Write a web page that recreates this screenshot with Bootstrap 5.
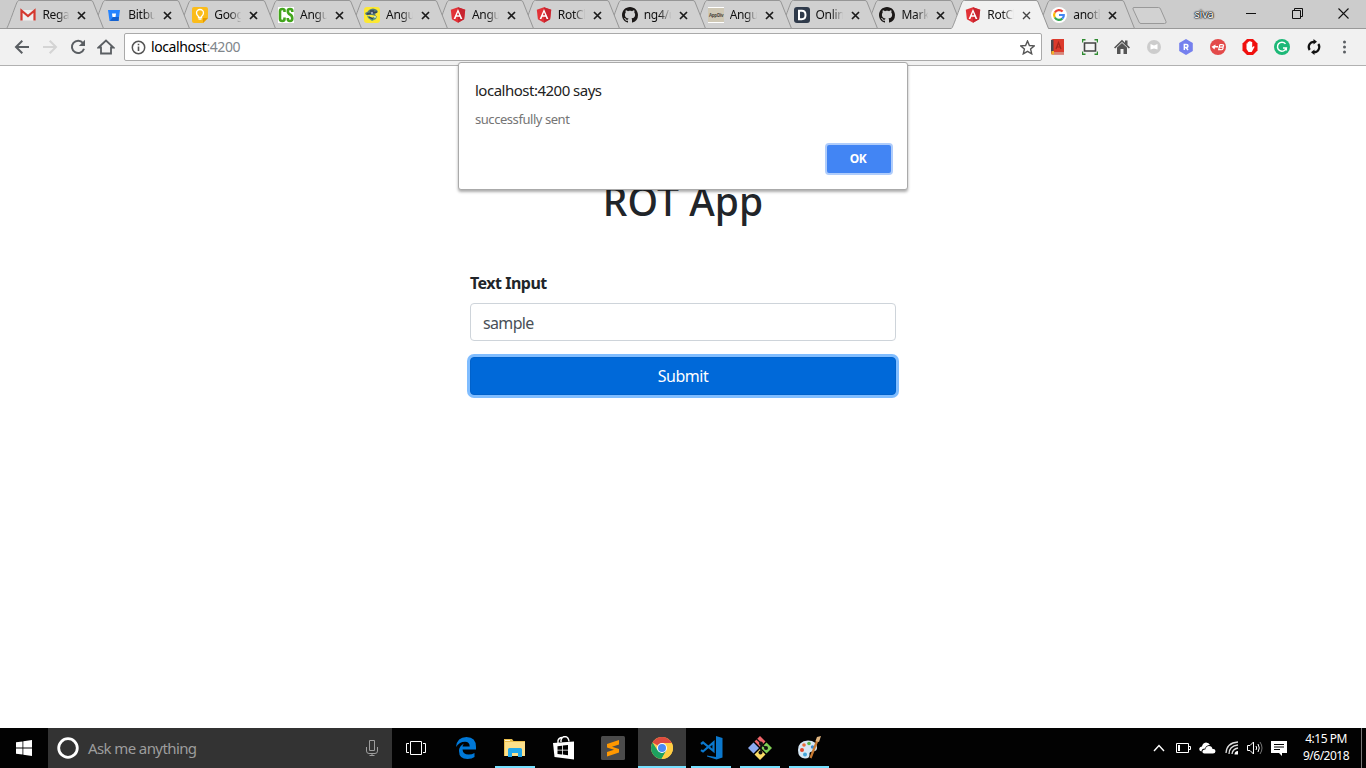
<!DOCTYPE html>
<html lang="en">
<head>
<meta charset="utf-8">
<title>RotClient</title>
<link href="https://cdn.jsdelivr.net/npm/bootstrap@5.3.0/dist/css/bootstrap.min.css" rel="stylesheet">
<style>
  body { height: 768px; overflow: hidden; font-family: "Noto Sans", "Open Sans", sans-serif; color: #212529; background: #fff; }
  svg { display: block; flex: none; }
  .tabstrip { height: 29px; background: #ccc; border-bottom: 1px solid #999; padding-left: 6.4px; }
  .tab-item { position: relative; flex: none; width: 98px; height: 29px; margin-right: -12.1px; padding: 1px 0 0 14px; font-size: 12px; color: #111; }
  .tab-item .shape { position: absolute; inset: 0; z-index: -1; }
  .tab-item { isolation: isolate; }
  .tab-label { width: 28px; height: 20px; line-height: 19px; margin-left: 6px; overflow: hidden; white-space: nowrap; letter-spacing: -.3px;
    -webkit-mask-image: linear-gradient(90deg, #000 55%, transparent 98%); mask-image: linear-gradient(90deg, #000 55%, transparent 98%); }
  .tab-x { margin-left: 7px; }
  .new-tab { margin: 6px 0 0 9px; }
  .profile { font-size: 11px; line-height: 28px; color: #fff; letter-spacing: -.2px; width: 48px; text-align: center;
    text-shadow: 0 0 1px #000, 0 0 1px #000, 0 0 2px #333, 0 0 2px #333; }
  .win-btn { width: 46px; height: 27px; }
  .toolbar { height: 37px; background: #f1f1f1; border-bottom: 1px solid #b1b1b1; padding-left: 8px; }
  .tool { width: 28px; height: 36px; }
  .ext { width: 32px; height: 36px; }
  .omnibox { width: 918px; height: 28px; margin-left: 4px; padding: 0 6px 0 6px; background: #fff; border: 1px solid #aaa; border-radius: 2px; font-size: 14px; letter-spacing: -.42px; line-height: 26px; color: #000; }
  .omnibox .port { color: #80868b; }
  .omnibox .address { margin-left: 5px; }
  .viewport { height: 662px; position: relative; }
  .dialog-box { position: absolute; z-index: 5; left: 458px; top: -4px; width: 450px; height: 128px; padding: 17px 14px 0 16px; background: #fff; border: 1px solid #aaa; border-radius: 3px; box-shadow: 0 2px 3px rgba(0,0,0,.33); }
  .dialog-title { font-size: 15px; line-height: 20px; letter-spacing: -.5px; color: #222; }
  .dialog-msg { font-size: 13px; line-height: 18px; margin-top: 10px; letter-spacing: -.45px; color: #757575; }
  .dialog-ok { width: 68px; height: 32px; padding: 0 2px 0 0; margin-top: 15px; background: #4285f4; border: 2px solid #b0cdfb; border-radius: 4px; color: #fff; font-size: 12px; font-weight: 700; letter-spacing: -.4px; line-height: 26px; }
  .app-form { width: 426px; padding-top: 111px; }
  .app-title { font-size: 39px; font-weight: 500; line-height: 48px; margin-bottom: 46px; letter-spacing: .1px; }
  .app-label { font-size: 16px; font-weight: 700; line-height: 24px; margin-bottom: 8px; letter-spacing: -.5px; }
  .app-input { height: 38px; padding: 7px 12px 5px; border: 1px solid #ced4da; border-radius: 4px; color: #495057; letter-spacing: -.65px; }
  .app-submit { height: 38px; margin-top: 16px; background: #0069d9; border-color: #0062cc; border-radius: 4px; color: #fff; letter-spacing: -.5px; box-shadow: 0 0 0 3px #80bdff; }
  .app-submit:hover { background: #0069d9; color: #fff; }
  .taskbar { height: 40px; background: #020202; color: #fff; }
  .search-box { width: 344px; background: #333; color: #9d9d9d; font-size: 15px; letter-spacing: -.6px; padding: 0 13px 0 8px; }
  .task-btn { width: 48px; height: 40px; margin-right: 1px; position: relative; }
  .task-btn.running::after { content: ""; position: absolute; left: 4px; right: 4px; bottom: 0; height: 2px; background: #76e0ff; }
  .task-btn.current { background: #3a3a3a; }
  .task-btn.current::after { left: 0; right: 0; }
  .tray-cell { width: 24px; height: 40px; }
  .clock { width: 64px; font-size: 12px; line-height: 17px; letter-spacing: -.5px; text-align: center; margin: 0 3px 2px 3px; }
  .peek { width: 5px; border-left: 1px solid #777; height: 40px; }
</style>
</head>
<body>
<svg width="0" height="0" class="position-absolute">
  <symbol id="tabshape" viewBox="0 0 98 29"><path d="M.5 28.5C2 28 10.500 2 11.500 1.500Q12 .5 13.500 .5H85Q86.500 .5 87 2L97.500 28.500Z" fill="#d0d0d0" stroke="#969696"/></symbol>
  <symbol id="x" viewBox="0 0 9 9"><path d="M1 1 8 8M8 1 1 8" stroke="#1b1b1b" stroke-width="1.700" fill="none"/></symbol>
  <symbol id="ng" viewBox="0 0 16 16"><path d="M8 .2 15.200 2.800 14.100 12.200 8 15.700 1.900 12.200 .8 2.800Z" fill="#e23237"/><path d="M8 .2 15.200 2.800 14.100 12.200 8 15.700Z" fill="#c8242f"/><path d="M8 2 3.600 11.900H5.400L6.300 9.700H9.700L10.600 11.900H12.400ZM8 5.300 9.200 8.300H6.800Z" fill="#fff" fill-rule="evenodd"/></symbol>
  <symbol id="gh" viewBox="0 0 16 16"><path d="M8 0C3.580 0 0 3.580 0 8c0 3.540 2.290 6.530 5.470 7.590.4.070.55-.17.55-.38 0-.19-.01-.82-.01-1.490-2.010.37-2.530-.49-2.690-.94-.09-.23-.48-.94-.82-1.130-.28-.15-.68-.52-.01-.53.63-.01 1.080.58 1.230.82.72 1.210 1.870.87 2.330.66.070-.52.28-.87.51-1.070-1.780-.2-3.640-.89-3.640-3.950 0-.87.31-1.590.82-2.150-.08-.2-.36-1.020.08-2.120 0 0 .67-.21 2.200.82.64-.18 1.320-.27 2-.27s1.360.09 2 .27c1.530-1.040 2.200-.82 2.200-.82.44 1.100.16 1.920.08 2.120.51.56.82 1.270.82 2.150 0 3.070-1.870 3.750-3.650 3.950.29.25.54.73.54 1.480 0 1.070-.01 1.930-.01 2.200 0 .21.15.46.55.38A8.010 8.010 0 0 0 16 8c0-4.420-3.580-8-8-8" fill="#1b1817"/></symbol>
</svg>

<header class="tabstrip d-flex">
  <div class="tab-item d-flex align-items-center" style="z-index:13"><svg class="shape" width="98" height="29"><use href="#tabshape"/></svg>
    <svg width="16" height="16"><path d="M1 3H15V13.500H1Z" fill="#eee"/><path d="M1.500 13.500V3.500L8 9 14.500 3.500V13.500" fill="none" stroke="#d5392f" stroke-width="2.200"/></svg>
    <span class="tab-label">Rega</span><svg class="tab-x" width="9" height="9"><use href="#x"/></svg></div>
  <div class="tab-item d-flex align-items-center" style="z-index:12"><svg class="shape" width="98" height="29"><use href="#tabshape"/></svg>
    <svg width="16" height="16"><path d="M2 3H14L12.500 14H3.500Z" fill="#2684ff"/><path d="M7 10H13L12.500 14H4Z" fill="#1461cf"/><path d="M6 6.500H10L9.500 10H6.500Z" fill="#fff"/></svg>
    <span class="tab-label">Bitbu</span><svg class="tab-x" width="9" height="9"><use href="#x"/></svg></div>
  <div class="tab-item d-flex align-items-center" style="z-index:11"><svg class="shape" width="98" height="29"><use href="#tabshape"/></svg>
    <svg width="16" height="16"><path d="M2 0H14Q16 0 16 2V11L11 16H2Q0 16 0 14V2Q0 0 2 0" fill="#fbbc1b"/><path d="M11 11H16L11 16Z" fill="#e59b00"/><path d="M6.500 9.500Q4.500 8 4.500 6A3.500 3.500 0 0 1 11.500 6Q11.500 8 9.500 9.500V10.500H6.500ZM6.500 12.200H9.500" fill="none" stroke="#fff" stroke-width="1.300"/></svg>
    <span class="tab-label">Goog</span><svg class="tab-x" width="9" height="9"><use href="#x"/></svg></div>
  <div class="tab-item d-flex align-items-center" style="z-index:10"><svg class="shape" width="98" height="29"><use href="#tabshape"/></svg>
    <svg width="16" height="16"><path d="M0 0H16V16H0Z" fill="#fff"/><path d="M6.500 5V3.500Q6.500 2 4.300 2 2 2 2 4V12Q2 14 4.300 14 6.500 14 6.500 12V10.500M14.300 5V4Q14.300 2 12 2 9.800 2 9.800 4 9.800 6.500 12 7.500 14.300 8.500 14.300 11.500 14.300 14 12 14 9.800 14 9.800 12V11" fill="none" stroke="#43a51d" stroke-width="2.600"/></svg>
    <span class="tab-label">Angu</span><svg class="tab-x" width="9" height="9"><use href="#x"/></svg></div>
  <div class="tab-item d-flex align-items-center" style="z-index:9"><svg class="shape" width="98" height="29"><use href="#tabshape"/></svg>
    <svg width="16" height="16"><rect width="16" height="16" rx="3" fill="#fce833"/><path d="M1 6Q4 5 5 3 9 0 13 3L14 5 11 7 12 9 8 8 5 8 2 8Z" fill="#557d79"/><path d="M3 8.500 8 10.500 13 9 12 12 8 14 4 11Z" fill="#5c9a7c"/><path d="M6 4H10M3 7 13 5M5 10 9 12" stroke="#37415a" stroke-width="1.300"/><path d="M7 6H9M10 10H12" stroke="#fff"/></svg>
    <span class="tab-label">Angu</span><svg class="tab-x" width="9" height="9"><use href="#x"/></svg></div>
  <div class="tab-item d-flex align-items-center" style="z-index:8"><svg class="shape" width="98" height="29"><use href="#tabshape"/></svg>
    <svg width="16" height="16"><use href="#ng"/></svg><span class="tab-label">Angu</span><svg class="tab-x" width="9" height="9"><use href="#x"/></svg></div>
  <div class="tab-item d-flex align-items-center" style="z-index:7"><svg class="shape" width="98" height="29"><use href="#tabshape"/></svg>
    <svg width="16" height="16"><use href="#ng"/></svg><span class="tab-label">RotCl</span><svg class="tab-x" width="9" height="9"><use href="#x"/></svg></div>
  <div class="tab-item d-flex align-items-center" style="z-index:6"><svg class="shape" width="98" height="29"><use href="#tabshape"/></svg>
    <svg width="16" height="16"><use href="#gh"/></svg><span class="tab-label">ng4/u</span><svg class="tab-x" width="9" height="9"><use href="#x"/></svg></div>
  <div class="tab-item d-flex align-items-center" style="z-index:5"><svg class="shape" width="98" height="29"><use href="#tabshape"/></svg>
    <svg width="16" height="16"><path d="M0 0H16V16H0Z" fill="#fff"/><path d="M0 1H16V15H0Z" fill="#cfc8b5"/><text x="1" y="9.500" font-size="4.500" font-weight="700" letter-spacing="-.3" fill="#4d4940">AppDiv</text></svg>
    <span class="tab-label">Angu</span><svg class="tab-x" width="9" height="9"><use href="#x"/></svg></div>
  <div class="tab-item d-flex align-items-center" style="z-index:4"><svg class="shape" width="98" height="29"><use href="#tabshape"/></svg>
    <svg width="16" height="16"><rect width="16" height="16" rx="3" fill="#2f3a4a"/><path d="M5 3.800H7.800Q11.500 3.800 11.500 8T7.800 12.200H5Z" fill="none" stroke="#fff" stroke-width="2"/></svg>
    <span class="tab-label">Onlin</span><svg class="tab-x" width="9" height="9"><use href="#x"/></svg></div>
  <div class="tab-item d-flex align-items-center" style="z-index:3"><svg class="shape" width="98" height="29"><use href="#tabshape"/></svg>
    <svg width="16" height="16"><use href="#gh"/></svg><span class="tab-label">Mark</span><svg class="tab-x" width="9" height="9"><use href="#x"/></svg></div>
  <div class="tab-item d-flex align-items-center" style="z-index:14"><svg class="shape" width="98" height="29"><path d="M0 29C2 28 10.500 2 11.500 1.500Q12 .5 13.500 .5H85Q86.500 .5 87 2L97.500 29Z" fill="#f1f1f1"/><path d="M.5 28.500C2 28 10.500 2 11.500 1.500Q12 .5 13.500 .5H85Q86.500 .5 87 2L97.500 28.500" fill="none" stroke="#969696"/></svg>
    <svg width="16" height="16"><use href="#ng"/></svg><span class="tab-label">RotCl</span><svg class="tab-x" width="9" height="9"><path d="M1 1 8 8M8 1 1 8" stroke="#444" stroke-width="1.400"/></svg></div>
  <div class="tab-item d-flex align-items-center" style="z-index:1"><svg class="shape" width="98" height="29"><use href="#tabshape"/></svg>
    <svg width="16" height="16"><circle cx="8" cy="8" r="8" fill="#fff"/><g fill="none" stroke-width="2.200"><path d="M11.600 4.600A4.900 4.900 0 0 0 3.800 5.500" stroke="#ea4335"/><path d="M3.800 5.500A4.900 4.900 0 0 0 3.800 10.500" stroke="#fbbc05"/><path d="M3.800 10.500A4.900 4.900 0 0 0 11.300 11.600" stroke="#34a853"/><path d="M11.300 11.600Q13 10 12.800 8H8" stroke="#4285f4"/></g></svg>
    <span class="tab-label">anoth</span><svg class="tab-x" width="9" height="9"><use href="#x"/></svg></div>
  <svg class="new-tab" width="36" height="20"><path d="M2.500 1.500H27Q28.500 1.500 29 3L34.500 15.500Q35 17.500 33 17.500H9.500Q8 17.500 7.500 16L1.500 3Q1 1.500 2.500 1.500Z" transform="translate(-.5 0)" fill="#d2d2d2" stroke="#999"/></svg>
  <div class="ms-auto d-flex">
    <div class="profile">siva</div>
    <div class="win-btn d-flex align-items-center justify-content-center"><svg width="11" height="11"><path d="M0 5.500H10" stroke="#111"/></svg></div>
    <div class="win-btn d-flex align-items-center justify-content-center"><svg width="11" height="11"><path d="M.5 2.500H8.500V10.500H.5ZM2.500 2.500V.5H10.500V8.500H8.500" fill="none" stroke="#111"/></svg></div>
    <div class="win-btn d-flex align-items-center justify-content-center"><svg width="11" height="11"><path d="M.5 .5 10.500 10.500M10.500 .5 .5 10.500" stroke="#111" stroke-width="1.100"/></svg></div>
  </div>
</header>

<nav class="toolbar d-flex align-items-center">
  <div class="tool d-flex align-items-center justify-content-center"><svg width="16" height="16"><path d="M15 8H2.500M8.300 1.800 2 8 8.300 14.200" fill="none" stroke="#5a5e62" stroke-width="2"/></svg></div>
  <div class="tool d-flex align-items-center justify-content-center"><svg width="16" height="16"><path d="M1 8H13.500M7.700 1.800 14 8 7.700 14.200" fill="none" stroke="#d4d4d4" stroke-width="2"/></svg></div>
  <div class="tool d-flex align-items-center justify-content-center"><svg width="16" height="16"><path d="M13 4A6.200 6.200 0 1 0 14 9.800" fill="none" stroke="#5a5e62" stroke-width="2"/><path d="M15 .8V7H8.800Z" fill="#5a5e62"/></svg></div>
  <div class="tool d-flex align-items-center justify-content-center"><svg width="18" height="16"><path d="M1.500 8.500 9 1.500 16.500 8.500H14V14.500H4V8.500Z" fill="none" stroke="#5a5e62" stroke-width="1.800"/></svg></div>
  <div class="omnibox d-flex align-items-center">
    <svg width="15" height="15"><circle cx="7.500" cy="7.500" r="6.200" fill="none" stroke="#555" stroke-width="1.500"/><path d="M7.500 6.500V11M7.500 3.800V5.300" stroke="#555" stroke-width="1.600"/></svg>
    <span class="address">localhost<span class="port">:4200</span></span>
    <svg class="ms-auto" width="15" height="15"><path d="M7.500 1 9.400 5.500 14.200 5.900 10.600 9.100 11.700 13.800 7.500 11.300 3.300 13.800 4.400 9.100 .8 5.900 5.600 5.500Z" fill="none" stroke="#555" stroke-width="1.400"/></svg>
  </div>
  <div class="ext d-flex align-items-center justify-content-center"><svg width="16" height="16"><path d="M3 0H14V13H3Q1 13 1 14V2Q1 0 3 0" fill="#dc3a2c"/><path d="M1 1H3.500V13H1Z" fill="#4a4a50"/><path d="M1 13H14V15.500H2Q1 15 1 13" fill="#c43328"/><path d="M3 14H14" stroke="#ead8c8"/><path d="M6 10 8.500 3.500 11 10M7 8H10" stroke="#a3261c" stroke-width="1.200" fill="none"/><path d="M1.500 12H4V16L2.700 15 1.500 16Z" fill="#f0b429"/></svg></div>
  <div class="ext d-flex align-items-center justify-content-center"><svg width="16" height="16"><path d="M2.500 4H13.500V12H2.500Z" fill="#f4f4f4" stroke="#444" stroke-width="1.600"/><path d="M.5 3.500V.8H3.500M12.500 .8H15.500V3.500M.5 12.500V15.200H3.500M12.500 15.200H15.500V12.500" fill="none" stroke="#2e8b30" stroke-width="1.400"/></svg></div>
  <div class="ext d-flex align-items-center justify-content-center"><svg width="16" height="16"><path d="M0 8.500 8 .8 11 3.700V1.500H13.500V6L16 8.500 14.800 9.500 8 3 1.200 9.500Z" fill="#555"/><path d="M3 8.500 8 4 13 8.500V15H9.500V10H6.500V15H3Z" fill="#555"/></svg></div>
  <div class="ext d-flex align-items-center justify-content-center"><svg width="16" height="16"><circle cx="8" cy="8" r="7" fill="#ccc"/><path d="M4.500 5 8 6.500 11.500 5V10.500L8 9.500 4.500 10.500Z" fill="#fff"/></svg></div>
  <div class="ext d-flex align-items-center justify-content-center"><svg width="16" height="16"><path d="M8 0 14.800 4V12L8 16 1.200 12V4Z" fill="#7580ee"/><path d="M6.300 11V5.500H8.200Q10 5.500 10 7T8.200 8.500H6.500M8 8.500 10 11" fill="none" stroke="#fff" stroke-width="1.400"/></svg></div>
  <div class="ext d-flex align-items-center justify-content-center"><svg width="16" height="16"><circle cx="8" cy="8" r="8" fill="#e34a4a"/><path d="M1.500 7.800 5.500 5.500V7H8V8.500H5L4.500 10.500Z" fill="#fff"/><path d="M9.800 5.600H12Q14 5.600 13.500 7T11.800 8Q13.500 8 13 9.500T10.500 10.700H8.700L9.800 5.600M9.200 8.100H12" fill="none" stroke="#fff" stroke-width="1.200"/></svg></div>
  <div class="ext d-flex align-items-center justify-content-center"><svg width="16" height="16"><path d="M5 0H11L15.500 4.500V11.500L11 16H5L.5 11.500V4.500Z" fill="#f0100e"/><path d="M4.500 8V4.500Q5.200 4 5.700 4.500V3Q6.500 2.300 7.200 3V2.300Q8 1.500 8.700 2.300V3Q9.500 2.300 10.200 3V8.500L11.500 7.200Q12.700 7 12.500 8L9.700 13H6.500L4.500 10Z" fill="#fff"/></svg></div>
  <div class="ext d-flex align-items-center justify-content-center"><svg width="16" height="16"><circle cx="8" cy="8" r="8" fill="#1cb877"/><path d="M11.500 4.900A4.500 4.500 0 1 0 12.300 9H9M12.300 9V11.500" fill="none" stroke="#fff" stroke-width="1.500"/></svg></div>
  <div class="ext d-flex align-items-center justify-content-center"><svg width="16" height="16"><path d="M8 2.800A5.200 5.200 0 0 0 3.700 11M8 13.200A5.200 5.200 0 0 0 12.300 5" fill="none" stroke="#111" stroke-width="2.200"/><path d="M7.500 0 11 2.800 7.500 5.600ZM8.500 10.400V16L5 13.200Z" fill="#111"/></svg></div>
  <div class="ext d-flex align-items-center justify-content-center"><svg width="16" height="16"><g fill="#5a5e62"><circle cx="6.500" cy="3" r="1.500"/><circle cx="6.500" cy="8" r="1.500"/><circle cx="6.500" cy="13" r="1.500"/></g></svg></div>
</nav>

<main class="viewport">
  <div class="dialog-box">
    <div class="dialog-title">localhost:4200 says</div>
    <div class="dialog-msg">successfully sent</div>
    <div class="d-flex justify-content-end"><button class="dialog-ok" type="button">OK</button></div>
  </div>
  <form class="app-form mx-auto">
    <h1 class="app-title text-center">ROT App</h1>
    <label class="app-label d-block" for="txt">Text Input</label>
    <input id="txt" class="form-control app-input" type="text" value="sample">
    <button class="btn app-submit w-100 d-block" type="button">Submit</button>
  </form>
</main>

<footer class="taskbar d-flex align-items-stretch">
  <div class="d-flex align-items-center justify-content-center" style="width:48px"><svg width="16" height="16"><path d="M0 2.300 6.500 1.400V7.600H0ZM7.300 1.300 16 0V7.600H7.300ZM0 8.400H6.500V14.600L0 13.700ZM7.300 8.400H16V16L7.300 14.700Z" fill="#fff"/></svg></div>
  <div class="search-box d-flex align-items-center">
    <svg width="24" height="24"><circle cx="12" cy="12" r="9.300" fill="none" stroke="#fff" stroke-width="2.800"/></svg>
    <span class="ms-2">Ask me anything</span>
    <svg class="ms-auto" width="14" height="18"><path d="M4.500 1.500H9.500V11.500H4.500ZM1.500 8V12Q1.500 14.500 4 14.500H10Q12.500 14.500 12.500 12V8M7 14.500V17M4.500 16.500H9.500" fill="none" stroke="#9d9d9d"/></svg>
  </div>
  <div class="task-btn d-flex align-items-center justify-content-center me-0"><svg width="20" height="14"><path d="M4.500 .5H15.500V13.500H4.500ZM3 2.500H.5V11.500H3M17 2.500H19.500V11.500H17" fill="none" stroke="#fff"/></svg></div>
  <div class="task-btn d-flex align-items-center justify-content-center" style="margin-left:2px"><svg width="20" height="22"><path d="M0 10Q1 0 10.500 0 20 0 20 10V12.500H6.500Q7 17.500 12.500 17.500 16 17.500 18.500 16V20Q16 22 11.500 22 3 22 3 14 3 9 8 6.500 6.700 8 6.500 9.500H13.700Q13.700 4.700 9 4.700 3.500 4.700 0 10Z" fill="#0078d7"/></svg></div>
  <div class="task-btn running d-flex align-items-center justify-content-center"><svg width="22" height="20"><path d="M0 1H8L9.500 3H21V18H0Z" fill="#e9bd4c"/><path d="M1 4H21V18H1Z" fill="#fce08a"/><path d="M4 19V11.500Q4 10 5.500 10H16.500Q18 10 18 11.500V19H14V15H8V19Z" fill="#22a8ea"/><path d="M1 2.500H6" stroke="#fff4cc"/></svg></div>
  <div class="task-btn d-flex align-items-center justify-content-center"><svg width="22" height="24"><path d="M0 7 21 5.500V23.500L1.500 21Z" fill="#fff"/><path d="M5 7V4.500Q6 1 10 1.500M8 6V4Q9 .5 12 .5 15.500 .8 16 5.500" fill="none" stroke="#fff" stroke-width="1.400"/><path d="M4.500 10.200 9 9.700V13.700H4.500ZM9.800 9.600 15 9V13.700H9.800ZM4.500 14.500H9V18.500L4.500 18ZM9.800 14.500H15V19.200L9.800 18.600Z" fill="#020202"/></svg></div>
  <div class="task-btn d-flex align-items-center justify-content-center"><svg width="24" height="24"><rect width="24" height="24" rx="1.500" fill="#4b4b4b"/><path d="M6 8 18 4V8.500L11 10.800 18 13V16.500L6 20.500V16L13 13.800 6 11.500Z" fill="#ff9800"/></svg></div>
  <div class="task-btn running current d-flex align-items-center justify-content-center"><svg width="22" height="22" viewBox="0 0 22 22"><circle cx="11" cy="11" r="11" fill="#fc5"/><path d="M11 11 1.500 5.500A11 11 0 0 1 20.500 5.500L21 6H11Z" fill="#de4b3f"/><path d="M1.500 5.500A11 11 0 0 0 10.500 22L15.300 13.500 11 11 6.500 13.300Z" fill="#1da15f"/><path d="M11 6H20.800A11 11 0 0 1 10.500 22L15.500 13.500Z" fill="#ffcd42"/><circle cx="11" cy="11" r="5" fill="#fff"/><circle cx="11" cy="11" r="4" fill="#4a8af4"/></svg></div>
  <div class="task-btn running d-flex align-items-center justify-content-center"><svg width="24" height="24"><path d="M17 0 23.500 2V21.500L17.500 23.500 8 20.500V19.500L17 21Z" fill="#0b78cd"/><path d="M2 8 4 6.500 14.500 15V6.500L4 15.500 2 14.200" fill="none" stroke="#0b78cd" stroke-width="2.200"/></svg></div>
  <div class="task-btn running d-flex align-items-center justify-content-center"><svg width="24" height="24" viewBox="0 0 24 24"><path d="M12 0 17.500 5.500 12 11 6.500 5.500Z" fill="#f0656a"/><path d="M5.500 6.500 11 12 5.500 17.500 0 12Z" fill="#8caaf0"/><path d="M18.500 6.500 24 12 18.500 17.500 13 12Z" fill="#80cf55"/><path d="M12 13 17.500 18.500 12 24 6.500 18.500Z" fill="#fbdc66"/><path d="M8.500 3 13 7V17M13 8 18 12" fill="none" stroke="#111" stroke-width="1.400"/><circle cx="13" cy="7.500" r="2" fill="#111"/><circle cx="18" cy="12" r="2" fill="#111"/><circle cx="12.500" cy="16.500" r="2" fill="#111"/></svg></div>
  <div class="task-btn running d-flex align-items-center justify-content-center"><svg width="24" height="24"><path d="M1 14Q1 5 11 4.500 20 4.500 20 12 20 15 16 15.500 12 15.500 12.500 18 13 22.500 8 22.500 1 22 1 14Z" fill="#d5e6f3"/><circle cx="5" cy="14" r="2" fill="#e2462b"/><circle cx="7" cy="9" r="1.800" fill="#e96c3c"/><circle cx="12" cy="7.500" r="1.800" fill="#56b349"/><circle cx="15.500" cy="11" r="1.700" fill="#3987d0"/><circle cx="8" cy="18.500" r="2" fill="#43a4d8"/><path d="M20.500 4 13.500 22" stroke="#c77a32" stroke-width="2.300"/><path d="M18.500 5 20 1 24 0 22 6Z" fill="#dfb580"/></svg></div>
  <div class="ms-auto d-flex align-items-center">
    <div class="tray-cell d-flex align-items-center justify-content-center"><svg width="12" height="8"><path d="M1 7 6 1.500 11 7" fill="none" stroke="#fff" stroke-width="1.400"/></svg></div>
    <div class="tray-cell d-flex align-items-center justify-content-center"><svg width="15" height="10"><path d="M.5 .5H12.500V9.500H.5ZM13 3.500H14.500V6.500H13" fill="none" stroke="#fff"/><path d="M2 2H4V8H2Z" fill="#fff"/></svg></div>
    <div class="tray-cell d-flex align-items-center justify-content-center"><svg width="17" height="12"><path d="M2.500 9.500Q-.5 8.500 .5 6 1 4.500 3 4.500 3.500 1 7 .5 10 .5 11 3 7 3 6 6.500 2.500 6.500 2.500 9.500Z" fill="#fff"/><path d="M5.500 11.500Q3 11 3.500 9 4 7.300 6.300 7.500 7 4 10 4 13 4 13.500 7 16.500 6.500 16.500 9.300 16.300 11.500 14 11.500Z" fill="#fff"/></svg></div>
    <div class="tray-cell d-flex align-items-center justify-content-end"><svg width="14" height="14" class="me-1"><path d="M1 12Q1.500 2 13 1M4 13Q4 5 13 4M7 13Q7.500 8 13 7" fill="none" stroke="#ddd" stroke-width="1.300"/><path d="M9.500 13.500Q9.500 10 13 10V13.500Z" fill="#fff"/></svg></div>
    <div class="tray-cell d-flex align-items-center justify-content-center"><svg width="17" height="14"><path d="M.5 4.500H3L6.500 1V13L3 9.500H.5Z" fill="none" stroke="#fff"/><path d="M9 5Q10.300 7 9 9M11 3Q13.500 7 11 11" fill="none" stroke="#fff"/><path d="M13 1Q17 7 13 13" fill="none" stroke="#777"/></svg></div>
    <div class="tray-cell d-flex align-items-center justify-content-center"><svg width="16" height="15"><path d="M0 0H16V12H11V15L8 12H0Z" fill="#fff"/><path d="M3 3.500H13M3 6H13M3 8.500H9" stroke="#020202"/></svg></div>
    <div class="clock">4:15 PM<br>9/6/2018</div>
    <div class="peek"></div>
  </div>
</footer>
<script src="https://cdn.jsdelivr.net/npm/bootstrap@5.3.0/dist/js/bootstrap.bundle.min.js"></script>
</body>
</html>
